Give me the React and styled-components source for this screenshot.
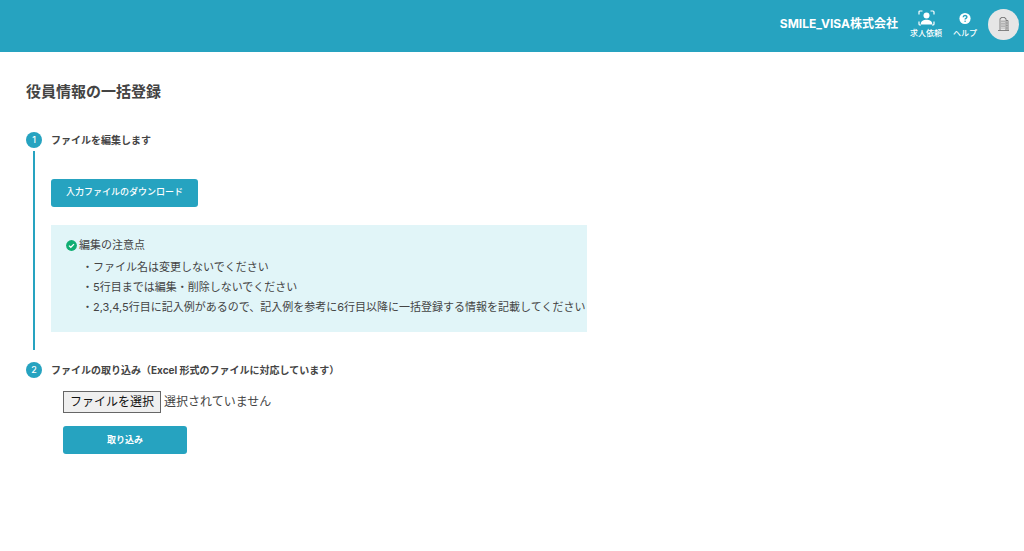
import React, { useState } from "react";
import styled, { createGlobalStyle } from "styled-components";

const teal = "#26a3c0";

const GlobalStyle = createGlobalStyle`
  * { box-sizing: border-box; }
  body {
    margin: 0;
    background: #fff;
    color: #444;
    font-family: Inter, "Noto Sans CJK JP", sans-serif;
    font-size: 11px;
    line-height: 20px;
  }
  button { font-family: inherit; }
`;

const Header = styled.header`
  display: flex;
  align-items: center;
  justify-content: flex-end;
  height: 52px;
  padding: 0 5px 4px;
  background: ${teal};
  color: #fff;
`;

const Company = styled.span`
  margin-right: 12px;
  font-size: 12px;
  font-weight: 700;
`;

const HeaderLink = styled.a`
  display: flex;
  flex-direction: column;
  align-items: center;
  gap: 1px;
  margin-right: 11px;
  color: #fff;
  font-size: 8px;
  font-weight: 500;
  line-height: 12px;
  text-decoration: none;
  svg { height: 16px; }
`;

const Avatar = styled.button`
  display: flex;
  align-items: center;
  justify-content: center;
  width: 31px;
  height: 31px;
  padding: 0;
  border: 0;
  border-radius: 50%;
  background: #e6e6e6;
`;

const Main = styled.main`
  padding: 28px 26px;
`;

const Title = styled.h1`
  margin: 0 0 28px;
  font-size: 15px;
  font-weight: 700;
  line-height: 24px;
`;

const Steps = styled.ol`
  margin: 0;
  padding: 0;
  list-style: none;
`;

const Step = styled.li`
  display: flex;
  gap: 9px;
`;

const Rail = styled.div`
  display: flex;
  flex-direction: column;
  align-items: center;
  gap: 3px;
`;

const Num = styled.span`
  width: 16px;
  height: 16px;
  border-radius: 50%;
  background: ${teal};
  color: #fff;
  font-size: 9px;
  font-weight: 500;
  line-height: 16px;
  text-align: center;
`;

const Line = styled.span`
  flex: 1;
  width: 2px;
  margin-bottom: 12px;
  background: ${teal};
`;

const StepBody = styled.div`
  flex: 1;
  padding-bottom: ${(p) => (p.$last ? "0" : "30px")};
`;

const StepTitle = styled.h2`
  margin: 0;
  font-size: 10px;
  font-weight: 700;
  line-height: 16px;
`;

const Button = styled.button`
  display: block;
  min-width: 124px;
  height: 28px;
  padding: 0 14px 2px;
  border: 0;
  border-radius: 3px;
  background: ${teal};
  color: #fff;
  font-size: 9px;
  font-weight: ${(p) => (p.$bold ? 700 : 500)};
`;

const DownloadButton = styled(Button)`
  min-width: 147px;
  margin: 31px 0 18px;
  padding-bottom: 4px;
`;

const Notes = styled.section`
  max-width: 536px;
  padding: 10px 0 15px 15px;
  background: #e1f5f8;
`;

const NotesTitle = styled.h3`
  display: flex;
  align-items: center;
  gap: 2px;
  margin: 0 0 2px;
  font-size: 11px;
  font-weight: 400;
`;

const NoteList = styled.ul`
  margin: 0;
  padding: 0 0 0 16px;
  list-style: none;
`;

const Note = styled.li`
  line-height: 20px;
`;

const ImportForm = styled.form`
  padding: 13px 12px 0;
`;

const FileInput = styled.input`
  position: absolute;
  width: 1px;
  height: 1px;
  opacity: 0;
`;

const FileLabel = styled.label`
  display: flex;
  align-items: center;
  gap: 3px;
  margin-bottom: 13px;
  font-size: 12px;
  line-height: 20px;
`;

const FileButton = styled.span`
  padding: 0 6px;
  border: 1px solid #666;
  background: #efefef;
  color: #111;
`;

const ScanIcon = () => (
  <svg width="17" height="16" viewBox="0 0 17 16" aria-hidden="true">
    <path
      d="M1 4.5V2q0-1 1-1h2.5M12.5 1H15q1 0 1 1v2.5M1 11.5V14q0 1 1 1h1M16 11.5V14q0 1-1 1h-1"
      fill="none"
      stroke="#fff"
      strokeWidth="1.2"
    />
    <circle cx="8.5" cy="5.600" r="3" fill="#fff" />
    <path d="M2.800 14.500v-.7c0-2.800 3-4 5.700-4s5.700 1.200 5.700 4v.7z" fill="#fff" />
  </svg>
);

const HelpIcon = () => (
  <svg width="12" height="16" viewBox="0 0 12 16" aria-hidden="true">
    <circle cx="6" cy="8.500" r="5.600" fill="#fff" />
    <path
      d="M4.200 7.200c0-2.300 3.700-2.300 3.700-.1 0 1.300-1.800 1.200-1.800 2.500"
      fill="none"
      stroke={teal}
      strokeWidth="1.400"
    />
    <circle cx="6.100" cy="11.300" r=".8" fill={teal} />
  </svg>
);

const BuildingIcon = () => (
  <svg width="13" height="16" viewBox="0 0 13 16" fill="none" stroke="#777" aria-hidden="true">
    <path d="M3 14.500V2.500h1V1.500h4v1h1v12M9 4.500h2v10M1 14.500h11" strokeWidth=".9" />
    <path d="M5 4.500v8M7 4.500v8" strokeWidth=".9" strokeDasharray="1.800 .6" />
    <path d="M9.200 7h1.500M9.200 9.500h1.500M9.200 12h1.500" strokeWidth=".6" />
  </svg>
);

const CheckIcon = () => (
  <svg width="11" height="11" viewBox="0 0 11 11" aria-hidden="true">
    <circle cx="5.500" cy="5.500" r="5.400" fill="#0fae72" />
    <path d="M3 5.600l1.800 1.700 3.200-3.200" fill="none" stroke="#fff" strokeWidth="1.300" />
  </svg>
);

const notes = [
  "ファイル名は変更しないでください",
  "5行目までは編集・削除しないでください",
  "2,3,4,5行目に記入例があるので、記入例を参考に6行目以降に一括登録する情報を記載してください",
];

export default function App() {
  const [fileName, setFileName] = useState("");
  return (
    <div lang="ja">
      <GlobalStyle />
      <Header>
        <Company>SMILE_VISA株式会社</Company>
        <HeaderLink href="#request">
          <ScanIcon />
          求人依頼
        </HeaderLink>
        <HeaderLink href="#help">
          <HelpIcon />
          ヘルプ
        </HeaderLink>
        <Avatar type="button" aria-label="アカウント">
          <BuildingIcon />
        </Avatar>
      </Header>
      <Main>
        <Title>役員情報の一括登録</Title>
        <Steps>
          <Step>
            <Rail>
              <Num>1</Num>
              <Line />
            </Rail>
            <StepBody>
              <StepTitle>ファイルを編集します</StepTitle>
              <DownloadButton type="button">入力ファイルのダウンロード</DownloadButton>
              <Notes>
                <NotesTitle>
                  <CheckIcon />
                  編集の注意点
                </NotesTitle>
                <NoteList>
                  {notes.map((n) => (
                    <Note key={n}>・{n}</Note>
                  ))}
                </NoteList>
              </Notes>
            </StepBody>
          </Step>
          <Step>
            <Rail>
              <Num>2</Num>
            </Rail>
            <StepBody $last>
              <StepTitle>ファイルの取り込み（Excel 形式のファイルに対応しています）</StepTitle>
              <ImportForm onSubmit={(e) => e.preventDefault()}>
                <FileInput
                  id="import-file"
                  type="file"
                  accept=".xlsx,.xls"
                  onChange={(e) => setFileName(e.target.files[0]?.name ?? "")}
                />
                <FileLabel htmlFor="import-file">
                  <FileButton>ファイルを選択</FileButton>
                  {fileName || "選択されていません"}
                </FileLabel>
                <Button $bold type="submit">取り込み</Button>
              </ImportForm>
            </StepBody>
          </Step>
        </Steps>
      </Main>
    </div>
  );
}
